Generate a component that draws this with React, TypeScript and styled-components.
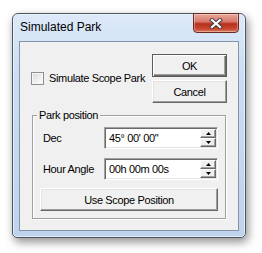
import React, { FC } from 'react';
import styled, { createGlobalStyle, css } from 'styled-components';

const GlobalStyle = createGlobalStyle`
  html, body {
    margin: 0;
    padding: 0;
    background: #ffffff;
    width: 262px;
    height: 253px;
    overflow: hidden;
  }
  * {
    box-sizing: border-box;
  }
`;

const SpinArrow: FC<{ down?: boolean }> = ({ down }) => (
  <svg width="5" height="3" viewBox="0 0 5 3">
    <path d={down ? 'M0 0 H5 L2.5 3 Z' : 'M0 3 H5 L2.5 0 Z'} fill="#000" />
  </svg>
);

const SpinField: FC<{ value: string }> = ({ value }) => (
  <Field>
    <FieldText>{value}</FieldText>
    <SpinColumn>
      <SpinButton>
        <SpinArrow />
      </SpinButton>
      <SpinButton>
        <SpinArrow down />
      </SpinButton>
    </SpinColumn>
  </Field>
);

const App: FC = () => {
  return (
    <Page>
      <GlobalStyle />
      <Window>
        <TitleBar>
          <Title>Simulated Park</Title>
          <CloseButton>
            <svg width="14" height="11" viewBox="0 0 14 11">
              <path d="M3 2 L11 9 M11 2 L3 9" stroke="#3d3d3d" strokeWidth="4" strokeLinecap="square" />
              <path d="M3 2 L11 9 M11 2 L3 9" stroke="#ffffff" strokeWidth="2.2" strokeLinecap="square" />
            </svg>
          </CloseButton>
        </TitleBar>
        <Client>
          <TopRow>
            <CheckRow>
              <CheckBox />
              <Text>Simulate Scope Park</Text>
            </CheckRow>
            <ButtonStack>
              <DialogButton $default>OK</DialogButton>
              <DialogButton>Cancel</DialogButton>
            </ButtonStack>
          </TopRow>
          <GroupBox>
            <Legend>Park position</Legend>
            <FieldRow>
              <FieldLabel>Dec</FieldLabel>
              <SpinField value={'45° 00\' 00"'} />
            </FieldRow>
            <FieldRow>
              <FieldLabel>Hour Angle</FieldLabel>
              <SpinField value="00h 00m 00s" />
            </FieldRow>
            <DialogButton $wide>Use Scope Position</DialogButton>
          </GroupBox>
        </Client>
      </Window>
    </Page>
  );
};

export default App;

// dialog text is Tahoma 8pt in the original, Arial metrics squeezed a bit
const uiFont = css`
  font-family: 'Liberation Sans', Arial, sans-serif;
  font-size: 11px;
  letter-spacing: -0.35px;
  color: #000;
`;

const Page = styled.div`
  padding: 13px 0 0 12px;
`;

const Window = styled.div`
  width: 234px;
  border: 1px solid #4b5665;
  border-radius: 6px 6px 5px 5px;
  background: linear-gradient(to bottom, #dce9f9 0%, #c9dcf2 30%, #bed3ed 100%);
  box-shadow: inset 0 0 0 1px rgba(255, 255, 255, 0.55), 2px 4px 10px rgba(0, 0, 0, 0.45);
`;

const TitleBar = styled.div`
  height: 27px;
  display: flex;
  justify-content: space-between;
  align-items: flex-start;
  padding: 0 6px 0 7px;
`;

const Title = styled.span`
  font-family: 'Liberation Sans', Arial, sans-serif;
  font-size: 12px;
  line-height: 27px;
  color: #000;
`;

const CloseButton = styled.div`
  width: 46px;
  height: 20px;
  margin-top: -1px;
  display: flex;
  align-items: center;
  justify-content: center;
  border: 1px solid #6a2a22;
  border-radius: 0 0 4px 4px;
  background: linear-gradient(to bottom, #e8a99b 0%, #d9786b 42%, #b8301f 55%, #c9482f 82%, #db7a5e 100%);
  box-shadow: inset 0 0 0 1px rgba(255, 255, 255, 0.35);
`;

const Client = styled.div`
  margin: 0 6px 6px;
  border: 1px solid #8494a9;
  background: #f0f0f0;
  padding: 12px 11px 11px;
`;

const TopRow = styled.div`
  display: flex;
  align-items: center;
  justify-content: space-between;
`;

const CheckRow = styled.label`
  display: flex;
  align-items: center;
  gap: 5px;
`;

const CheckBox = styled.span`
  width: 13px;
  height: 13px;
  border: 1px solid #8e8f8f;
  background: linear-gradient(135deg, #d8d8d8 0%, #f4f4f4 70%, #ffffff 100%);
  box-shadow: inset 0 0 0 1px #f6f6f6;
`;

const Text = styled.span`
  ${uiFont};
  line-height: 13px;
`;

const ButtonStack = styled.div`
  display: flex;
  flex-direction: column;
  gap: 3px;
`;

const DialogButton = styled.div<{ $default?: boolean; $wide?: boolean }>`
  ${uiFont};
  width: ${({ $wide }) => ($wide ? '178px' : '75px')};
  height: 23px;
  display: flex;
  align-items: center;
  justify-content: center;
  background: #f0f0f0;
  border: 1px solid;
  border-color: #ffffff #696969 #696969 #ffffff;
  box-shadow: inset -1px -1px 0 #a0a0a0, inset 1px 1px 0 #e3e3e3;

  ${({ $default }) =>
    $default &&
    css`
      border-color: #5c5c5c;
      box-shadow: inset 1px 1px 0 #ffffff, inset -1px -1px 0 #696969, inset -2px -2px 0 #a0a0a0;
    `}
`;

const GroupBox = styled.div`
  position: relative;
  margin: 12px 1px 0;
  padding: 11px 7px 7px;
  border: 1px solid #a0a0a0;
  box-shadow: inset 1px 1px 0 #ffffff, 1px 1px 0 #ffffff;
  display: flex;
  flex-direction: column;
  gap: 9px;

  & > :last-child {
    margin-top: -1px;
  }
`;

const Legend = styled.span`
  ${uiFont};
  position: absolute;
  top: -7px;
  left: 4px;
  padding: 0 2px;
  line-height: 13px;
  background: #f0f0f0;
`;

const FieldRow = styled.div`
  display: flex;
  align-items: center;
`;

const FieldLabel = styled.span`
  ${uiFont};
  width: 64px;
  padding-left: 3px;
`;

const Field = styled.div`
  flex: 1;
  height: 22px;
  display: flex;
  background: #ffffff;
  border: 1px solid;
  border-color: #a0a0a0 #ffffff #ffffff #a0a0a0;
  box-shadow: inset 1px 1px 0 #696969, inset -1px -1px 0 #e3e3e3;
  padding: 1px;
`;

const FieldText = styled.span`
  ${uiFont};
  flex: 1;
  padding-left: 3px;
  display: flex;
  align-items: center;
`;

const SpinColumn = styled.div`
  width: 16px;
  display: flex;
  flex-direction: column;
`;

const SpinButton = styled.div`
  flex: 1;
  display: flex;
  align-items: center;
  justify-content: center;
  background: #f0f0f0;
  border: 1px solid;
  border-color: #ffffff #696969 #696969 #ffffff;
  box-shadow: inset -1px -1px 0 #a0a0a0;
`;
